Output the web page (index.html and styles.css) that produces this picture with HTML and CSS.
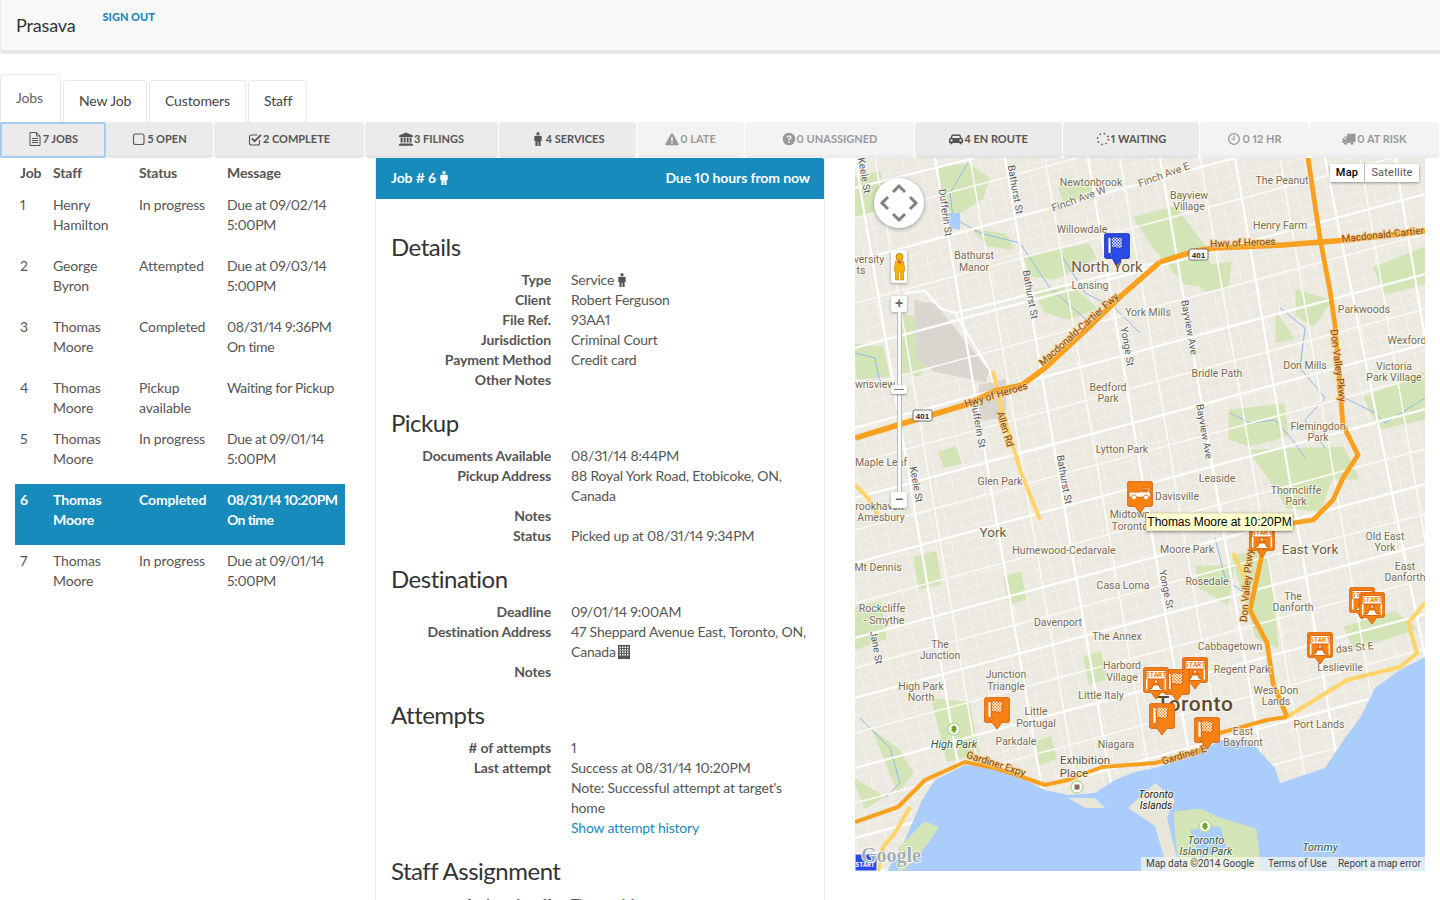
FILE: index.html
```html
<!DOCTYPE html>
<html lang="en">
<head>
<meta charset="utf-8">
<title>Prasava</title>
<link rel="stylesheet" href="styles.css">
</head>
<body>
<svg class="defs" width="0" height="0" aria-hidden="true">
  <defs>
    <symbol id="i-file" viewBox="0 0 14 14"><path d="M2 .5h6.5L12 4v9.5H2z M8.5 .5V4H12" fill="none" stroke="currentColor"/><path d="M4 6.5h6M4 8.5h6M4 10.5h6" stroke="currentColor"/></symbol>
    <symbol id="i-square" viewBox="0 0 14 14"><rect x="1.5" y="2" width="10.5" height="10.5" rx="2" fill="none" stroke="currentColor" stroke-width="1.1"/></symbol>
    <symbol id="i-check" viewBox="0 0 14 14"><path d="M11.5 8v3a2 2 0 0 1-2 2h-6a2 2 0 0 1-2-2V5a2 2 0 0 1 2-2h6" fill="none" stroke="currentColor" stroke-width="1.1"/><path d="M3.8 6.4 6.6 9.2 13 2.8" fill="none" stroke="currentColor" stroke-width="1.8"/></symbol>
    <symbol id="i-bank" viewBox="0 0 14 14"><path d="M7 .5 14 3.5V5H0V3.5zM0 12h14v1.7H0zM1 11h12v.6H1zM1.6 5.6h2V10.500h-2zM4.7 5.600h1.900V10.500H4.700zM7.700 5.600h1.900V10.500H7.700zM10.600 5.600h1.900V10.500h-1.900z" fill="currentColor"/></symbol>
    <symbol id="i-male" viewBox="0 0 14 14"><circle cx="7" cy="1.700" r="1.600" fill="currentColor"/><path d="M4.500 3.700h5A1.200 1.200 0 0 1 10.700 5v4H9.600V14H7.400V9.800H6.600V14H4.400V9H3.300V5a1.200 1.200 0 0 1 1.200-1.300z" fill="currentColor"/></symbol>
    <symbol id="i-warn" viewBox="0 0 14 14"><path d="M7 1.200c.4 0 .7.200.9.500l5.800 10.400c.3.600-.1 1.200-.8 1.200H1.100c-.7 0-1.100-.600-.8-1.200L6.100 1.700c.2-.3.500-.5.900-.5z" fill="currentColor"/><path d="M6.200 5h1.600l-.2 4.400H6.400zM6.300 10.300h1.400v1.400H6.300z" fill="#f2f2f2"/></symbol>
    <symbol id="i-help" viewBox="0 0 14 14"><circle cx="7" cy="7" r="6.300" fill="currentColor"/><path d="M4.600 5.400C4.800 4 5.800 3.300 7.100 3.300c1.400 0 2.500.9 2.500 2.100 0 1.100-.7 1.500-1.300 1.900-.4.300-.6.500-.6 1H6.200c0-1 .4-1.500 1-1.900.5-.3.800-.5.800-.9s-.4-.7-.9-.7-.9.300-1 .8zM6.200 9.200h1.600v1.500H6.200z" fill="#f2f2f2"/></symbol>
    <symbol id="i-car" viewBox="0 0 14 14"><path d="M3.400 2.600h7.200c.5 0 .8.300 1 .7l1 2.700c.8.200 1.400.8 1.400 1.700v3.400h-1.400v1.200h-2V11.100H3.400v1.200h-2V11.100H0V7.700c0-.9.600-1.500 1.400-1.700l1-2.700c.2-.4.500-.7 1-.7zm.3 1.300L3 6h8l-.7-2.100z M2.500 7.300a1.100 1.100 0 1 0 .01 0z M11.500 7.300a1.100 1.100 0 1 0 .01 0z" fill="currentColor" fill-rule="evenodd"/></symbol>
    <symbol id="i-spin" viewBox="0 0 14 14"><circle cx="7" cy="7" r="5.500" fill="none" stroke="currentColor" stroke-width="1.600" stroke-dasharray="1.500 2.820"/></symbol>
    <symbol id="i-clock" viewBox="0 0 14 14"><circle cx="7" cy="7" r="5.400" fill="none" stroke="currentColor" stroke-width="1.300"/><path d="M7 3.500V7.500H4.500" fill="none" stroke="currentColor" stroke-width="1.200"/></symbol>
    <symbol id="i-truck" viewBox="0 0 14 14"><path d="M5.200 1.800H13.500V10H8V11H5.200A1.600 1.600 0 0 0 2 11H.5V7.300L2.800 4.600H5.200zM1.800 7.200H4.200V5.600H3.200z" fill="currentColor" fill-rule="evenodd"/><circle cx="3.600" cy="11.300" r="1.500" fill="currentColor"/><circle cx="10" cy="11.300" r="1.500" fill="currentColor"/></symbol>
    <symbol id="i-build" viewBox="0 0 12 14"><rect width="12" height="14" fill="currentColor"/><path d="M1.500 1.500h1.500v1.500H1.500zM4 1.500h1.500v1.500H4zM6.500 1.500h1.500v1.500H6.500zM9 1.500h1.500v1.500H9zM1.500 4h1.500v1.500H1.500zM4 4h1.500v1.500H4zM6.500 4h1.500v1.500H6.500zM9 4h1.500v1.500H9zM1.500 6.500h1.500V8H1.500zM4 6.500h1.500V8H4zM6.500 6.500h1.500V8H6.500zM9 6.500h1.500V8H9zM1.500 9h1.500v1.500H1.500zM4 9h1.500v1.500H4zM6.500 9h1.500v1.500H6.500zM9 9h1.500v1.500H9z" fill="#fff"/></symbol>

    <pattern id="streets" width="15" height="12" patternUnits="userSpaceOnUse" patternTransform="rotate(-14)"><path d="M0 0H15M0 0V12" fill="none" stroke="#f8f7f3" stroke-width="1.100"/></pattern>
    <pattern id="chk-o" width="3" height="3" patternUnits="userSpaceOnUse"><rect width="3" height="3" fill="#fff"/><rect width="1.500" height="1.500" fill="#f98113"/><rect x="1.500" y="1.500" width="1.500" height="1.500" fill="#f98113"/></pattern>
    <pattern id="chk-b" width="3" height="3" patternUnits="userSpaceOnUse"><rect width="3" height="3" fill="#fff"/><rect width="1.500" height="1.500" fill="#2a4be8"/><rect x="1.500" y="1.500" width="1.500" height="1.500" fill="#2a4be8"/></pattern>

    <symbol id="mk-flag" viewBox="0 0 26 33" overflow="visible">
      <path d="M2 .7h22a1.300 1.300 0 0 1 1.300 1.300v22a1.300 1.300 0 0 1-1.300 1.300h-6L13 32l-5-6.700H2A1.300 1.300 0 0 1 .7 24V2A1.300 1.300 0 0 1 2 .7z"/>
      <path d="M5 3 6.300 3 8 24H6.500z" fill="#fff"/><path d="M7 5c4-3 7 1 12-1.500l-.5 11c-4 2.500-7.500-1.500-10.700 1z" fill="url(#chk-o)"/><path d="M5.500 5v15" stroke="#fff" stroke-width="2"/>
    </symbol>
    <symbol id="mk-blue" viewBox="0 0 26 33" overflow="visible">
      <path d="M2 .7h22a1.300 1.300 0 0 1 1.300 1.300v22a1.300 1.300 0 0 1-1.300 1.300h-6L13 32l-5-6.700H2A1.300 1.300 0 0 1 .7 24V2A1.300 1.300 0 0 1 2 .7z"/>
      <path d="M5 3 6.300 3 8 24H6.500z" fill="#fff"/><path d="M7 5c4-3 7 1 12-1.500l-.5 11c-4 2.500-7.500-1.500-10.700 1z" fill="url(#chk-b)"/><path d="M5.500 5v15" stroke="#fff" stroke-width="2"/>
    </symbol>
    <symbol id="mk-start" viewBox="0 0 26 33" overflow="visible">
      <path d="M2 .7h22a1.300 1.300 0 0 1 1.300 1.300v22a1.300 1.300 0 0 1-1.300 1.300h-6L13 32l-5-6.700H2A1.300 1.300 0 0 1 .7 24V2A1.300 1.300 0 0 1 2 .7z"/>
      <rect x="3" y="3.500" width="20" height="8.500" fill="#fff"/><path d="M3.700 12v10.500M22.300 12v10.500" stroke="#fff" stroke-width="1.500"/>
      <text class="start-word" x="13" y="10.300">START</text>
      <path d="M12 13h2l3.300 8.500h2v2H6.700v-2h2z" fill="#fff"/><path d="M10.800 16h4.400l.7 2h-5.800z" fill="#f98113"/>
    </symbol>
    <symbol id="mk-car" viewBox="0 0 26 33" overflow="visible">
      <path d="M2 .7h22a1.300 1.300 0 0 1 1.300 1.300v22a1.300 1.300 0 0 1-1.300 1.300h-6L13 32l-5-6.700H2A1.300 1.300 0 0 1 .7 24V2A1.300 1.300 0 0 1 2 .7z"/>
      <path d="M2 12.500c0-1 1-1.500 2-1.500h9.500l2.500-4h6c.5 0 .8.300.8.700V12h1v3.500c0 .5-.3.800-.8.800H2.500c-.3 0-.5-.2-.5-.5z" fill="#fff"/>
      <path d="M16.500 8.200 15 10.800h6V8.200z" fill="#f98113"/>
      <circle cx="7" cy="16.300" r="2.500" fill="#fff" stroke="#f98113"/><circle cx="19" cy="16.300" r="2.500" fill="#fff" stroke="#f98113"/>
    </symbol>
  </defs>
</svg>

<header class="topbar">
  <span class="brand">Prasava</span>
  <a class="signout" href="#">SIGN OUT</a>
</header>

<nav class="tabs">
  <a class="tab tab-active" href="#">Jobs</a>
  <a class="tab" href="#">New Job</a>
  <a class="tab" href="#">Customers</a>
  <a class="tab" href="#">Staff</a>
</nav>

<div class="stats">
  <a class="stat stat-focus" href="#"><svg class="ico"><use href="#i-file"/></svg>7 JOBS</a>
  <a class="stat" href="#"><svg class="ico"><use href="#i-square"/></svg>5 OPEN</a>
  <a class="stat" href="#"><svg class="ico"><use href="#i-check"/></svg>2 COMPLETE</a>
  <a class="stat" href="#"><svg class="ico"><use href="#i-bank"/></svg>3 FILINGS</a>
  <a class="stat" href="#"><svg class="ico"><use href="#i-male"/></svg>4 SERVICES</a>
  <a class="stat stat-off" href="#"><svg class="ico"><use href="#i-warn"/></svg>0 LATE</a>
  <a class="stat stat-off" href="#"><svg class="ico"><use href="#i-help"/></svg>0 UNASSIGNED</a>
  <a class="stat" href="#"><svg class="ico"><use href="#i-car"/></svg>4 EN ROUTE</a>
  <a class="stat" href="#"><svg class="ico"><use href="#i-spin"/></svg>1 WAITING</a>
  <a class="stat stat-off" href="#"><svg class="ico"><use href="#i-clock"/></svg>0 12 HR</a>
  <a class="stat stat-off" href="#"><svg class="ico"><use href="#i-truck"/></svg>0 AT RISK</a>
</div>

<main class="main">
  <section class="jobs">
    <table class="jobs-table">
      <colgroup><col class="c-job"><col class="c-staff"><col class="c-status"><col class="c-msg"></colgroup>
      <thead><tr><th>Job</th><th>Staff</th><th>Status</th><th>Message</th></tr></thead>
      <tbody>
        <tr><td>1</td><td>Henry Hamilton</td><td>In progress</td><td><p>Due at 09/02/14 5:00PM</p></td></tr>
        <tr><td>2</td><td>George Byron</td><td>Attempted</td><td><p>Due at 09/03/14 5:00PM</p></td></tr>
        <tr><td>3</td><td>Thomas Moore</td><td>Completed</td><td><p>08/31/14 9:36PM<br>On time</p></td></tr>
        <tr><td>4</td><td>Thomas Moore</td><td>Pickup available</td><td><p>Waiting for Pickup</p></td></tr>
        <tr><td>5</td><td>Thomas Moore</td><td>In progress</td><td><p>Due at 09/01/14 5:00PM</p></td></tr>
        <tr class="row-on"><td>6</td><td>Thomas Moore</td><td>Completed</td><td><p>08/31/14 10:20PM<br>On time</p></td></tr>
        <tr><td>7</td><td>Thomas Moore</td><td>In progress</td><td><p>Due at 09/01/14 5:00PM</p></td></tr>
      </tbody>
    </table>
  </section>

  <section class="detail">
    <div class="detail-head">
      <span class="detail-id">Job # 6<svg class="ico ico-tight"><use href="#i-male"/></svg></span>
      <span class="detail-due">Due 10 hours from now</span>
    </div>
    <div class="detail-body">
      <h3>Details</h3>
      <dl>
        <dt>Type</dt><dd>Service<svg class="ico ico-after"><use href="#i-male"/></svg></dd>
        <dt>Client</dt><dd>Robert Ferguson</dd>
        <dt>File Ref.</dt><dd>93AA1</dd>
        <dt>Jurisdiction</dt><dd>Criminal Court</dd>
        <dt>Payment Method</dt><dd>Credit card</dd>
        <dt>Other Notes</dt><dd></dd>
      </dl>
      <h3>Pickup</h3>
      <dl>
        <dt>Documents Available</dt><dd>08/31/14 8:44PM</dd>
        <dt>Pickup Address</dt><dd>88 Royal York Road, Etobicoke, ON, Canada</dd>
        <dt>Notes</dt><dd></dd>
        <dt>Status</dt><dd>Picked up at 08/31/14 9:34PM</dd>
      </dl>
      <h3>Destination</h3>
      <dl>
        <dt>Deadline</dt><dd>09/01/14 9:00AM</dd>
        <dt>Destination Address</dt><dd>47 Sheppard Avenue East, Toronto, ON, Canada<svg class="ico ico-after"><use href="#i-build"/></svg></dd>
        <dt>Notes</dt><dd></dd>
      </dl>
      <h3>Attempts</h3>
      <dl>
        <dt># of attempts</dt><dd>1</dd>
        <dt>Last attempt</dt><dd>Success at 08/31/14 10:20PM<br>Note: Successful attempt at target's home<br><a class="link" href="#">Show attempt history</a></dd>
      </dl>
      <h3>Staff Assignment</h3>
      <dl>
        <dt>Assigned staff</dt><dd>Thomas Moore</dd>
      </dl>
    </div>
  </section>

  <section class="map">
    <svg class="map-art" viewBox="0 0 570 713" width="570" height="713">
      <rect class="land" width="570" height="713"/>
      <rect width="570" height="713" fill="url(#streets)"/>

      <g class="park">
        <polygon points="85,10 113,7 133,20 127,40 100,57 87,40"/>
        <polygon points="120,73 150,77 157,90 133,87"/>
        <polygon points="170,100 233,87 240,100 200,120 177,117"/>
        <polygon points="180,133 217,130 240,150 213,160 190,153"/>
        <polygon points="45,157 60,160 87,187 63,217 45,213"/>
        <polygon points="0,187 27,190 33,217 3,220"/>
        <polygon points="442,133 475,143 458,167 442,157"/>
        <polygon points="422,157 438,180 422,183"/>
        <polygon points="375,253 428,247 432,277 395,287 375,280"/>
        <polygon points="395,293 488,290 502,320 415,320"/>
        <polygon points="412,315 475,322 465,352 432,349"/>
        <polygon points="378,399 412,392 422,489 402,479"/>
        <polygon points="342,409 378,409 372,445 345,429"/>
        <polygon points="78,542 113,545 123,595 93,602"/>
        <polygon points="20,575 43,592 57,615 43,632"/>
        <polygon points="0,622 27,639 10,649"/>
        <polygon points="0,20 25,15 30,50 0,60"/>
        <polygon points="205,30 235,27 240,40 210,45"/>
        <polygon points="280,60 320,50 350,90 360,130 330,125 300,90"/>
        <polygon points="520,110 570,90 570,125 530,135"/>
        <polygon points="510,240 570,215 570,260 525,270"/>
        <polygon points="85,295 100,290 105,305 90,308"/>
        <polygon points="490,470 540,455 560,470 500,490"/>
        <polygon points="230,500 245,495 250,520 235,525"/>
        <polygon points="180,585 195,580 200,600 185,605"/>
        <polygon points="345,110 375,105 372,130 350,132"/>
        <polygon points="150,420 165,415 170,440 155,445"/>
        <polygon points="60,400 80,395 85,425 65,430"/>
        <polygon points="0,450 25,445 30,480 0,490"/>
      </g>
      <polygon class="airport" points="60,143 80,147 133,213 130,223 80,213 63,200"/>
      <polygon class="airport" points="125,228 150,222 150,258 125,262"/>

      <g class="stream">
        <path d="M113,5 95,35 98,60 125,75 165,85 195,130 235,165"/>
        <path d="M205,95 230,135 260,150 285,175"/>
        <path d="M425,150 450,170 445,210 470,240 450,262 470,290"/>
        <path d="M375,255 395,265 420,262 440,285 450,300"/>
        <path d="M490,240 520,255 530,265 570,240"/>
        <path d="M0,195 20,200 25,225"/>
        <path d="M360,380 370,420 395,440 400,470"/>
        <path d="M5,560 35,590 45,625 30,640"/>
      </g>
      <polygon class="water" points="92,55 105,55 105,72 95,70"/>

      <g class="road-minor">
        <path d="M20,0 L141,713M115,0 L236,713M190,0 L311,713M265,0 L386,713M345,0 L466,713M425,0 L546,713M505,0 L570,382"/>
        <path d="M0,60 L570,-94M0,145 L570,-9M0,230 L570,76M0,305 L570,151M0,372 L570,218M0,445 L570,291M0,510 L570,356M0,575 L570,421M0,645 L570,491M0,720 L570,566M0,790 L570,636"/>
      </g>
      <g class="road-major">
        <path d="M0,0 L121,713M80,0 L201,713M150,0 L271,713M233,0 L354,713M305,0 L426,713M380,0 L501,713M470,0 L570,500M540,0 L570,180"/>
        <path d="M0,30 L120,0M0,103 L380,0M0,190 L570,36M0,270 L570,116M0,340 L570,186M0,405 L570,251M0,480 L570,326M0,540 L570,386M0,610 L570,456M0,680 L570,526M0,760 L570,606M60,830 L570,670"/>
      </g>
      <path class="road-major" d="M50,135 70,133 85,150 100,155 135,213 138,225M100,155 300,105"/>

      <path class="water" d="M32,713 50,682 67,642 80,622 110,607 140,610 170,622 190,632 213,637 240,635 260,622 280,614 300,610 333,599 367,582 395,583 420,610 425,625 470,610 490,580 505,560 520,530 545,512 570,499V713z"/>
      <polygon class="land-soft" points="273,650 300,625 320,642 312,660 325,713 313,713 300,668"/>
      <polygon class="park" points="320,655 345,652 367,662 400,672 405,713 325,713"/>
      <polygon class="water" points="335,672 365,668 372,690 345,700"/>
      <polygon class="land-soft" points="213,640 240,640 250,650 230,650"/>
      <polygon class="park" points="45,690 70,665 82,670 60,700 45,713"/>

      <g class="yellow">
        <polyline points="138,213 147,253 167,317 185,362"/>
        <polyline points="0,327 13,340 23,357"/>
        <polyline points="55,649 40,675 28,689 23,713"/>
        <polyline points="432,559 492,522 545,509 562,495 553,465 570,445"/>
        <polyline points="378,395 390,420 392,440"/>
      </g>
      <g class="freeway">
        <polyline class="fw-wide" points="0,280 43,267 110,247 140,233 167,227 190,210 233,170 267,137 305,104"/>
        <polyline class="fw-wide" points="305,104 340,93 360,90 428,87 492,82 570,73"/>
        <polyline class="fw-mid" points="453,0 465,80 475,133 480,167 488,267 503,297 488,320 478,342 458,362 438,365 420,368"/>
        <polyline class="fw-mid" points="408,392 395,452 412,485 418,525 432,559"/>
        <polyline points="0,664 43,649 70,622 110,604 140,610 170,620 190,627 213,622 247,609 300,605 343,594 365,575 412,562 432,559"/>
      </g>

      <g class="shield-g">
        <rect class="shield" x="58" y="252" width="19" height="11" rx="2"/><text class="shield-t" x="67.500" y="261">401</text>
        <rect class="shield" x="334" y="91" width="19" height="11" rx="2"/><text class="shield-t" x="343.500" y="100">401</text>
      </g>

      <g class="lb">
        <text x="236" y="28">Newtonbrook</text>
        <text x="310" y="20" transform="rotate(-20 310 20)">Finch Ave E</text>
        <text x="225" y="44" transform="rotate(-20 225 44)">Finch Ave W</text>
        <text x="334" y="41">Bayview</text><text x="334" y="52">Village</text>
        <text x="427" y="26">The Peanut</text>
        <text x="425" y="71">Henry Farm</text>
        <text x="227" y="75">Willowdale</text>
        <text class="lb-big" x="252" y="114">North York</text>
        <text x="235" y="131">Lansing</text>
        <text x="293" y="158">York Mills</text>
        <text x="119" y="101">Bathurst</text><text x="119" y="113">Manor</text>
        <text x="509" y="155">Parkwoods</text>
        <text x="552" y="186">Wexford</text>
        <text x="539" y="212">Victoria</text><text x="539" y="223">Park Village</text>
        <text x="450" y="211">Don Mills</text>
        <text x="463" y="272">Flemingdon</text><text x="463" y="283">Park</text>
        <text x="362" y="219">Bridle Path</text>
        <text x="253" y="233">Bedford</text><text x="253" y="244">Park</text>
        <text x="267" y="295">Lytton Park</text>
        <text x="362" y="324">Leaside</text>
        <text x="441" y="336">Thorncliffe</text><text x="441" y="347">Park</text>
        <text x="322" y="342">Davisville</text>
        <text x="275" y="360">Midtown</text><text x="275" y="372">Toronto</text>
        <text x="145" y="327">Glen Park</text>
        <text x="26" y="308">Maple Leaf</text>
        <text x="20" y="230">wnsview</text>
        <text x="14" y="105">versity</text><text x="6" y="116">ts</text>
        <text x="26" y="352">rookhaven-</text><text x="26" y="363">Amesbury</text>
        <text class="lb-mid" x="138" y="379">York</text>
        <text x="209" y="396">Humewood-Cedarvale</text>
        <text x="332" y="395">Moore Park</text>
        <text class="lb-mid" x="455" y="396">East York</text>
        <text x="530" y="382">Old East</text><text x="530" y="393">York</text>
        <text x="550" y="412">East</text><text x="550" y="423">Danforth</text>
        <text x="268" y="431">Casa Loma</text>
        <text x="352" y="427">Rosedale</text>
        <text x="23" y="413">Mt Dennis</text>
        <text x="27" y="454">Rockcliffe</text><text x="29" y="466">- Smythe</text>
        <text x="438" y="442">The</text><text x="438" y="453">Danforth</text>
        <text x="203" y="468">Davenport</text>
        <text x="262" y="482">The Annex</text>
        <text x="375" y="492">Cabbagetown</text>
        <text x="85" y="490">The</text><text x="85" y="501">Junction</text>
        <text x="267" y="511">Harbord</text><text x="267" y="523">Village</text>
        <text x="387" y="515">Regent Park</text>
        <text x="421" y="536">West Don</text><text x="421" y="547">Lands</text>
        <text x="151" y="520">Junction</text><text x="151" y="532">Triangle</text>
        <text x="66" y="532">High Park</text><text x="66" y="543">North</text>
        <text x="246" y="541">Little Italy</text>
        <text x="181" y="557">Little</text><text x="181" y="569">Portugal</text>
        <text x="388" y="577">East</text><text x="388" y="588">Bayfront</text>
        <text x="464" y="570">Port Lands</text>
        <text x="485" y="513">Leslieville</text>
        <text x="500" y="493" transform="rotate(-6 500 493)">das St E</text>
        <text x="161" y="587">Parkdale</text>
        <text x="261" y="590">Niagara</text>
        <text class="lb-dark" x="230" y="606">Exhibition</text><text class="lb-dark" x="219" y="619">Place</text>
        <text class="lb-green" x="99" y="590">High Park</text>
        <text class="lb-black" x="301" y="640">Toronto</text><text class="lb-black" x="301" y="651">Islands</text>
        <text class="lb-green" x="351" y="686">Toronto</text><text class="lb-green" x="351" y="697">Island Park</text>
        <text class="lb-green" x="465" y="693">Tommy</text>
        <text class="lb-city" x="340" y="553">Toronto</text>
      </g>
      <g class="lb lb-st">
        <text x="6" y="18" transform="rotate(80 6 18)">Keele St</text>
        <text x="87" y="55" transform="rotate(82 87 55)">Dufferin St</text>
        <text x="157" y="32" transform="rotate(80 157 32)">Bathurst St</text>
        <text x="172" y="137" transform="rotate(80 172 137)">Bathurst St</text>
        <text x="269" y="189" transform="rotate(80 269 189)">Yonge St</text>
        <text x="331" y="170" transform="rotate(80 331 170)">Bayview Ave</text>
        <text x="346" y="274" transform="rotate(80 346 274)">Bayview Ave</text>
        <text x="120" y="267" transform="rotate(80 120 267)">Dufferin St</text>
        <text x="206" y="322" transform="rotate(80 206 322)">Bathurst St</text>
        <text x="58" y="327" transform="rotate(80 58 327)">Keele St</text>
        <text x="308" y="432" transform="rotate(78 308 432)">Yonge St</text>
        <text x="18" y="490" transform="rotate(80 18 490)">Jane St</text>
      </g>
      <g class="lb lb-hw">
        <text x="142" y="240" transform="rotate(-17 142 240)">Hwy of Heroes</text>
        <text x="226" y="174" transform="rotate(-42 226 174)">Macdonald-Cartier Fwy</text>
        <text x="147" y="272" transform="rotate(73 147 272)">Allen Rd</text>
        <text x="388" y="88" transform="rotate(-2 388 88)">Hwy of Heroes</text>
        <text x="528" y="80" transform="rotate(-6 528 80)">Macdonald-Cartier</text>
        <text x="480" y="208" transform="rotate(83 480 208)">Don Valley Pkwy</text>
        <text x="395" y="428" transform="rotate(-85 395 428)">Don Valley Pkwy</text>
        <text x="140" y="609" transform="rotate(18 140 609)">Gardiner Expy</text>
        <text x="330" y="600" transform="rotate(-17 330 600)">Gardiner E</text>
      </g>

      <circle class="poi" cx="99" cy="571" r="6"/><path class="poi-t" d="M99 567l3 3h-1.500l2 2.500h-2v2h-3v-2h-2l2-2.500H96z"/>
      <circle class="poi" cx="222" cy="629" r="6"/><rect class="poi-m" x="219.500" y="626.500" width="5" height="5"/>
      <circle class="poi" cx="350" cy="668" r="6"/><path class="poi-t" d="M350 664l3 3h-1.500l2 2.500h-2v2h-3v-2h-2l2-2.500H347z"/>

      <g class="marker">
        <use class="mk-b" href="#mk-blue" x="249" y="75" width="26" height="33"/>
        <use href="#mk-car" x="272" y="323" width="26" height="33"/>
        <use href="#mk-start" x="394" y="367" width="26" height="33"/>
        <use href="#mk-start" x="494" y="429" width="26" height="33"/>
        <use href="#mk-start" x="504" y="434" width="26" height="33"/>
        <use href="#mk-start" x="452" y="474" width="26" height="33"/>
        <use href="#mk-start" x="327" y="499" width="26" height="33"/>
        <use href="#mk-flag" x="309" y="511" width="26" height="33"/>
        <use href="#mk-start" x="288" y="509" width="26" height="33"/>
        <use href="#mk-flag" x="294" y="545" width="26" height="33"/>
        <use href="#mk-flag" x="339" y="559" width="26" height="33"/>
        <use href="#mk-flag" x="129" y="539" width="26" height="33"/>
      </g>
      <g>
        <rect class="blue-start" x="0" y="696" width="22" height="17"/>
        <text class="blue-word" x="10" y="709">START</text>
      </g>
      <text class="logo" x="6" y="704">Google</text>
    </svg>

    <div class="pan">
      <svg class="pan-art" viewBox="0 0 50 50"><path d="M19 14l6-6 6 6M14 19l-6 6 6 6M36 19l6 6-6 6M19 36l6 6 6-6" fill="none" stroke="#808080" stroke-width="3"/></svg>
    </div>
    <div class="zoomctl">
      <div class="peg">
        <svg class="peg-art" viewBox="0 0 12 28"><circle cx="6" cy="4" r="3.500" fill="#f6b400" stroke="#c47f00"/><path d="M2 8h8l1.500 10H10v9H7V19H5v8H2v-9H.5z" fill="#f6b400" stroke="#c47f00" stroke-width=".6"/><path d="M3.500 8h5L6 11.500z" fill="#e4574e"/></svg>
      </div>
      <div class="zbtn">+</div>
      <div class="ztrack"><div class="zthumb"></div></div>
      <div class="zbtn">−</div>
    </div>
    <div class="maptype"><span class="mt-on">Map</span><span class="mt-off">Satellite</span></div>
    <div class="tip">Thomas Moore at 10:20PM</div>
    <div class="attrib"><span class="attr-a">Map data ©2014 Google</span><span class="attr-b">Terms of Use</span><span class="attr-c">Report a map error</span></div>
  </section>
</main>
</body>
</html>
```
FILE: styles.css
```css
* { box-sizing: border-box; }
html, body { margin: 0; height: 900px; overflow: hidden; background: #fff; }
body { font-family: "Lato", "Noto Sans", sans-serif; font-size: 14px; line-height: 20px; color: #555; letter-spacing: -0.12px; font-variant-numeric: proportional-nums; }
a { text-decoration: none; }
.defs { position: absolute; }

.topbar { height: 54px; background: #f8f8f8; border-left: 1px solid #eaeaea; border-bottom: 4px solid #e6e6e6; border-bottom-left-radius: 3px; display: flex; align-items: flex-start; padding-left: 15px; }
.brand { font-size: 18px; color: #333; margin-top: 15px; line-height: 20px; letter-spacing: -0.15px; }
.signout { font-size: 11px; font-weight: 900; color: #1a8ab9; margin: 7px 0 0 27px; line-height: 20px; letter-spacing: 0; }

.tabs { display: flex; align-items: flex-end; gap: 2px; height: 68px; }
.tab { display: block; height: 42px; padding: 10px 15px 0; border: 1px solid #e9e9e9; border-bottom: 0; border-radius: 4px 4px 0 0; color: #444; background: #fff; white-space: nowrap; }
.tab-active { height: 48px; color: #666; margin-right: 0; padding-top: 13px; width: 61px; }
.tab:nth-child(2) { width: 84px; }
.tab:nth-child(3) { width: 97px; margin-left: 0; }
.tab:nth-child(4) { width: 59px; }

.stats { display: grid; grid-template-columns: 106px 108px 151px 134px 138px 108px 170px 148px 137px 110px 130px; height: 36px; }
.stat { display: flex; align-items: center; justify-content: center; margin-right: 1px; background: #ebebeb; border-bottom: 3px solid #e3e3e3; border-radius: 4px; font-size: 11px; font-weight: 700; letter-spacing: 0; color: #555; }
.stat-off { background: #f3f3f3; border-bottom-color: #ececec; color: #999; }
.stat-focus { outline: 2px solid #a6cbed; outline-offset: -2px; border-radius: 2px; margin-right: 0; }
.ico { width: 14px; height: 14px; margin-right: 1px; flex: none; }
.ico-tight { vertical-align: -2px; margin: 0 0 0 1px; }
.ico-after { vertical-align: -2px; margin: 0 0 0 1px; color: #555; }

.main { display: grid; grid-template-columns: 330px 450px 570px; column-gap: 30px; padding-left: 15px; align-items: start; }

.jobs-table { width: 330px; table-layout: fixed; border-collapse: collapse; }
.c-job { width: 33px; } .c-staff { width: 86px; } .c-status { width: 88px; } .c-msg { width: 123px; }
.jobs-table th { text-align: left; padding: 5px 5px 6px; font-weight: 700; color: #555; }
.jobs-table td { vertical-align: top; padding: 6px 5px 5px; }
.jobs-table p { margin: 0 0 10px; letter-spacing: -0.35px; }
.jobs-table .row-on p { letter-spacing: -0.6px; white-space: nowrap; }
.row-on td { background: #178bbb; color: #fff; font-weight: 700; }

.detail { height: 742px; border-left: 1px solid #eee; border-right: 1px solid #eee; overflow: hidden; }
.detail-head { height: 41px; margin: 0 -1px; background: #178bbb; border-top-right-radius: 4px; display: flex; justify-content: space-between; align-items: center; padding: 0 15px 2px 16px; color: #fff; font-weight: 700; }
.detail-id { display: block; }
.detail-due { font-size: 14px; letter-spacing: -0.1px; }
.detail-body { padding: 15px 15px 0; }
h3 { margin: 20px 0 11px; font-size: 24px; line-height: 25px; font-weight: 400; color: #333; letter-spacing: -0.5px; }
dl { margin: 0; display: grid; grid-template-columns: 160px 238px; column-gap: 20px; }
dt { text-align: right; font-weight: 700; }
dd { margin: 0; min-height: 20px; letter-spacing: -0.2px; }
.link { color: #1a8ab9; }

.map { position: relative; width: 570px; height: 713px; overflow: hidden; }
.map-art { display: block; }
.land { fill: #ece9e0; }
.land-soft { fill: #e8e6d8; }
.park, .park polygon { fill: #d3e5b6; stroke: #d3e5b6; stroke-width: 3; stroke-linejoin: round; }
.airport { fill: #dad6cf; stroke: #dad6cf; stroke-width: 2; stroke-linejoin: round; }
.stream path { fill: none; stroke: #8fb8ea; stroke-width: 1; }
.water { fill: #abcdfb; }
.road-minor path { fill: none; stroke: #fbfaf7; stroke-width: 1.600; }
.road-major, .road-major path { fill: none; stroke: #fff; stroke-width: 2.200; }
.yellow polyline { fill: none; stroke: #fdd468; stroke-width: 4; stroke-linejoin: round; }
.freeway polyline { fill: none; stroke: #f9a11f; stroke-width: 4; stroke-linejoin: round; }
.freeway .fw-wide { stroke-width: 5.500; }
.freeway .fw-mid { stroke-width: 4.800; }
.shield { fill: #fff; stroke: #555; stroke-width: .8; }
.shield-t { font: 700 8px "Liberation Sans", sans-serif; fill: #222; text-anchor: middle; letter-spacing: 0; }

.lb text { font: 10.500px "Roboto", sans-serif; letter-spacing: 0; fill: #7c6c50; text-anchor: middle; paint-order: stroke; stroke: rgba(255,255,255,.65); stroke-width: 2px; }
.lb .lb-big { font-size: 15px; fill: #6e5f42; }
.lb .lb-mid { font-size: 13.500px; fill: #6e5f42; }
.lb .lb-dark { font-size: 11.500px; fill: #5c5240; }
.lb .lb-green { font-style: italic; fill: #3a5d46; font-size: 11px; }
.lb .lb-black { font-style: italic; fill: #222; }
.lb .lb-city { font-size: 21px; font-weight: 500; fill: #5a4b2f; letter-spacing: .6px; }
.lb-st text { font-size: 10px; fill: #5a5a5a; }
.lb-hw text { font-size: 10px; fill: #7b4a0c; stroke: rgba(253,200,130,.8); }

.poi { fill: #fff; stroke: #bcd79b; stroke-width: 1.500; }
.poi-t { fill: #6aa52a; }
.poi-m { fill: #8a6a4c; }

.marker use { fill: #f98113; stroke: #d9640c; stroke-width: 1; }
.marker .mk-b { fill: #2a4be8; stroke: #1b35b5; }
.start-word { font: 700 7px "Liberation Mono", monospace; fill: #f98113; stroke: none; text-anchor: middle; letter-spacing: 0; }
.logo { font: 700 20px "Liberation Serif", serif; fill: #a3abb5; paint-order: stroke; stroke: #fff; stroke-width: 1.500px; letter-spacing: 0; }
.blue-start { fill: #2a4be8; stroke: #fff; stroke-width: 1; }
.blue-word { font: 700 6.500px "Liberation Mono", monospace; fill: #fff; text-anchor: middle; letter-spacing: 0; }

.pan { position: absolute; left: 19px; top: 20px; width: 50px; height: 50px; background: #fff; border-radius: 50%; box-shadow: 0 1px 4px rgba(0,0,0,.35); }
.pan-art { display: block; width: 50px; height: 50px; }
.zoomctl { position: absolute; left: 36px; top: 92px; width: 16px; height: 258px; display: flex; flex-direction: column; align-items: center; }
.peg { width: 16px; height: 33px; background: #fff; border-radius: 2px; box-shadow: 0 1px 3px rgba(0,0,0,.35); margin-bottom: 13px; display: flex; align-items: center; justify-content: center; flex: none; }
.peg-art { width: 13px; height: 28px; display: block; }
.zbtn { width: 16px; height: 16px; background: #fff; border-radius: 2px; box-shadow: 0 1px 3px rgba(0,0,0,.35); font: 700 14px/15px "Liberation Sans", sans-serif; color: #666; text-align: center; flex: none; letter-spacing: 0; }
.ztrack { position: relative; width: 5px; flex: 1; background: #fafafa; border-left: 1px solid #bdbdbd; border-right: 1px solid #bdbdbd; }
.zthumb { position: absolute; left: -7px; top: 73px; width: 16px; height: 9px; background: #fff; border-radius: 2px; box-shadow: 0 1px 2px rgba(0,0,0,.4); }
.zthumb::after { content: ""; position: absolute; left: 3px; right: 3px; top: 4px; height: 1px; background: #777; }
.maptype { position: absolute; right: 6px; top: 6px; height: 18px; width: 89px; display: flex; background: #fff; border-radius: 1px; box-shadow: 0 1px 3px rgba(0,0,0,.4); font: 11px/18px "Roboto", sans-serif; text-align: center; letter-spacing: .2px; }
.mt-on { width: 35px; font-weight: 500; color: #000; border-right: 1px solid #bbb; }
.mt-off { flex: 1; color: #555; }
.tip { position: absolute; left: 291px; top: 355px; height: 18px; width: 147px; background: #ffffd0; box-shadow: 0 1px 3px rgba(0,0,0,.45); border: 1px solid #e8e8b8; font: 12px/16px "Liberation Sans", sans-serif; letter-spacing: -0.05px; color: #000; text-align: center; white-space: nowrap; }
.attrib { position: absolute; right: 0; bottom: 0; width: 284px; height: 14px; background: rgba(245,245,245,.72); font: 10px/14px "Roboto", sans-serif; letter-spacing: -0.04px; color: #444; display: flex; padding-left: 5px; white-space: nowrap; }
.attr-a { width: 122px; }
.attr-b { width: 70px; }
```
